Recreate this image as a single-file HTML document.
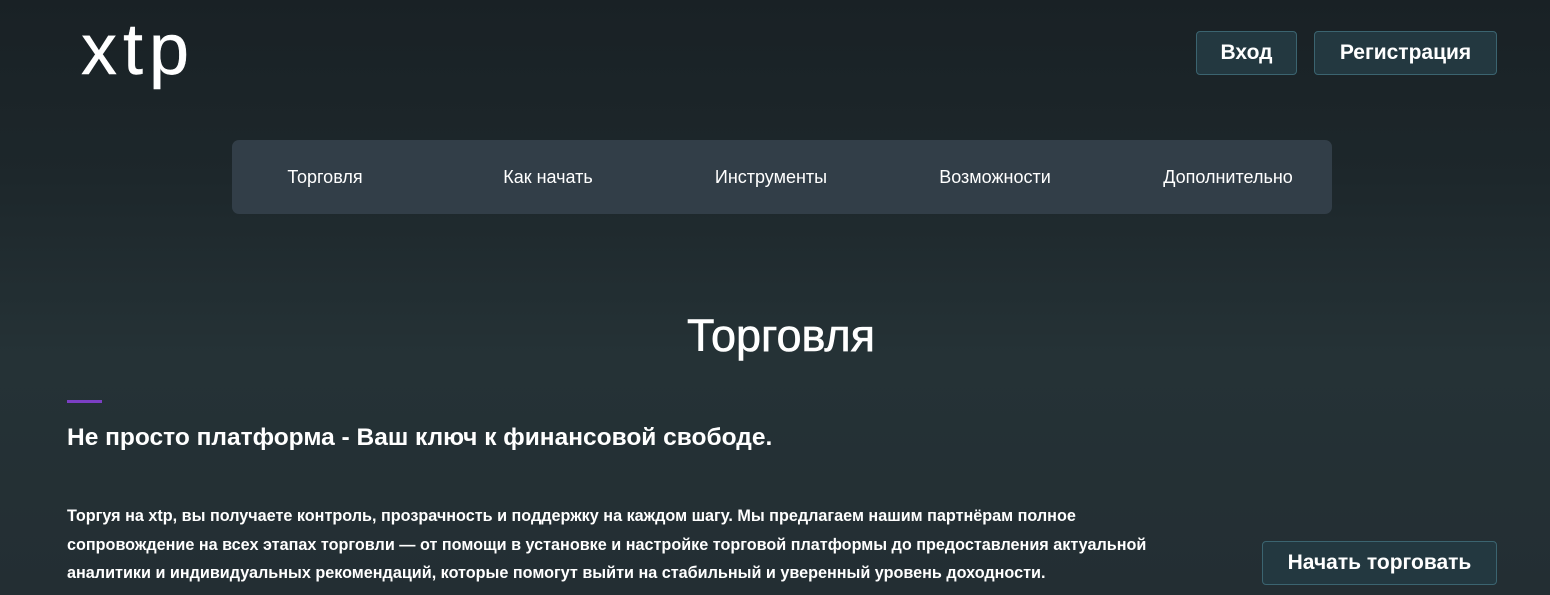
<!DOCTYPE html>
<html><head><meta charset="utf-8"><style>
*{margin:0;padding:0;box-sizing:border-box}
body{width:1550px;height:595px;overflow:hidden;background:linear-gradient(180deg,#192125 0%,#1d272b 30%,#253236 60%,#232e33 100%);font-family:"Liberation Sans","DejaVu Sans",sans-serif;color:#fff;position:relative}
.logo{position:absolute;left:81px;top:8px;font-size:72px;font-family:"Liberation Sans",sans-serif;font-weight:normal;letter-spacing:6px;line-height:84px;-webkit-text-stroke:0.4px #fff}
.btn{position:absolute;background:#233840;border:1px solid #3b6470;border-radius:4px;font-weight:bold;font-size:21px;display:flex;align-items:center;justify-content:center;color:#fff}
.nav{position:absolute;left:232px;top:140px;width:1100px;height:74px;background:#323e48;border-radius:7px}
.nav span{position:absolute;top:27px;font-size:18px;transform:translateX(-50%);white-space:nowrap}
h1{position:absolute;left:0;width:1562px;text-align:center;top:310px;font-size:45px;font-weight:normal;-webkit-text-stroke:0.6px #fff}
.bar{position:absolute;left:67px;top:400px;width:35px;height:3px;background:#7b3fc4}
h2{position:absolute;left:67px;top:424px;font-size:24.5px;font-weight:bold}
p{position:absolute;left:67px;top:502px;width:1110px;font-size:16.2px;font-weight:bold;line-height:28.5px}
</style></head><body>
<div class="logo">xtp</div>
<div class="btn" style="left:1196px;top:31px;width:101px;height:44px">Вход</div>
<div class="btn" style="left:1314px;top:31px;width:183px;height:44px">Регистрация</div>
<div class="nav">
<span style="left:93px">Торговля</span>
<span style="left:316px">Как начать</span>
<span style="left:539px">Инструменты</span>
<span style="left:763px">Возможности</span>
<span style="left:996px">Дополнительно</span>
</div>
<h1>Торговля</h1>
<div class="bar"></div>
<h2>Не просто платформа - Ваш ключ к финансовой свободе.</h2>
<p>Торгуя на xtp, вы получаете контроль, прозрачность и поддержку на каждом шагу. Мы предлагаем нашим партнёрам полное сопровождение на всех этапах торговли — от помощи в установке и настройке торговой платформы до предоставления актуальной аналитики и индивидуальных рекомендаций, которые помогут выйти на стабильный и уверенный уровень доходности.</p>
<div class="btn" style="left:1262px;top:541px;width:235px;height:44px">Начать торговать</div>
</body></html>
